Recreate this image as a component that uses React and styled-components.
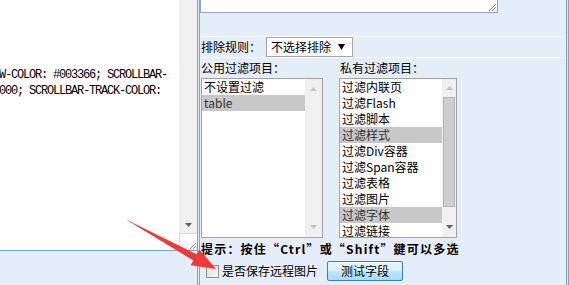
import React from "react";
import styled, { createGlobalStyle } from "styled-components";

const COL = {
  bg: "#E5EDF8",
  frame: "#7BA3D3",
  memo: "#8AA5C5",
  listBorder: "#A3A3A3",
  track: "#F0F0F0",
  sel: "#C8C8C8",
};

const CJK = `"Noto Sans CJK SC", "Liberation Sans", sans-serif`;

const GlobalStyle = createGlobalStyle`
  html, body { margin: 0; padding: 0; background: ${COL.bg}; }
  body {
    width: 569px; height: 285px; overflow: hidden;
    font-family: ${CJK};
    font-size: 12px; color: #000;
  }
`;

const Page = styled.div`
  position: relative;
  display: flex;
  width: 569px;
  height: 285px;
  overflow: hidden;
  background: ${COL.bg};
`;

/* ---------- left pane ---------- */
const LeftCol = styled.div`
  flex: none;
  width: 198px;
  height: 100%;
  box-sizing: border-box;
  border-right: 1px solid ${COL.frame};
`;

const Editor = styled.div`
  display: flex;
  height: 251px;
  box-sizing: border-box;
  border-bottom: 1px solid ${COL.frame};
  background: #fff;
`;

const CodeArea = styled.div`
  flex: 1;
  overflow: hidden;
  padding-top: 3px;
  font-family: "Liberation Mono", monospace;
  font-size: 12px;
  letter-spacing: -1.2px;
  line-height: 16px;
  white-space: pre;
  color: #000;
`;

const CodeLine = styled.div`
  height: 16px;
  margin-left: -1px;
`;

const VScroll = styled.div`
  flex: none;
  width: 18px;
  display: flex;
  flex-direction: column;
  background: ${COL.track};
`;

const VTrack = styled.div`
  flex: 1;
`;

const ScrollBtn = styled.div`
  flex: none;
  height: ${(p) => p.$h || 17}px;
  display: flex;
  align-items: center;
  justify-content: center;
`;

const Corner = styled.div`
  flex: none;
  height: 17px;
  box-sizing: border-box;
  background: #fff;
  border-top: 1px solid #DADADA;
  border-left: 1px solid #DADADA;
  display: flex;
  align-items: flex-end;
  justify-content: flex-end;
`;

/* ---------- right pane ---------- */
const RightCol = styled.div`
  flex: none;
  margin-left: 1px;
  width: 368px;
  height: 100%;
  box-sizing: border-box;
  border-left: 1px solid ${COL.frame};
  border-right: 1px solid ${COL.frame};
  display: flex;
  flex-direction: column;
`;

const Edge = styled.div`
  flex: none;
  margin-left: 1px;
  width: 1px;
  height: 100%;
  background: ${COL.frame};
`;

const MemoCell = styled.div`
  height: 37px;
  box-sizing: border-box;
  border-bottom: 1px solid #fff;
`;

const Memo = styled.div`
  position: relative;
  width: 298px;
  height: 13px;
  box-sizing: border-box;
  background: #fff;
  border: 1px solid ${COL.memo};
  border-top: none;
`;

const Grip = styled.svg`
  position: absolute;
  right: 0;
  bottom: 0;
`;

const RuleRow = styled.div`
  height: 21px;
  box-sizing: border-box;
  border-bottom: 1px solid #fff;
  display: flex;
  align-items: center;
  padding-left: 1px;
`;

const Label = styled.div`
  line-height: 16px;
  white-space: nowrap;
  padding-left: ${(p) => p.$indent || 0}px;
`;

const Select = styled.div`
  margin-left: 5px;
  width: 87px;
  height: 20px;
  box-sizing: border-box;
  border: 1px solid #A5A5A5;
  background: #fff;
  display: flex;
  align-items: center;
  justify-content: space-between;
  padding: 0 7px 0 4px;
  line-height: 16px;
`;

const FilterArea = styled.div`
  padding: 2px 0 0 1px;
  display: grid;
  grid-template-columns: 122px 118px;
  column-gap: 16px;
  row-gap: 2px;
`;

const ListBox = styled.div`
  height: 160px;
  box-sizing: border-box;
  border: 1px solid ${COL.listBorder};
  background: #fff;
  display: flex;
  overflow: hidden;
`;

const Items = styled.div`
  flex: 1;
  overflow: hidden;
`;

const Item = styled.div`
  height: 16px;
  line-height: 16px;
  padding-left: 2px;
  white-space: nowrap;
  background: ${(p) => (p.$sel ? COL.sel : "transparent")};
  color: ${(p) => (p.$sel ? "#333" : "#000")};
`;

const ListScroll = styled.div`
  flex: none;
  width: ${(p) => p.$w}px;
  background: ${COL.track};
  display: flex;
  flex-direction: column;
`;

const ThumbTrack = styled.div`
  flex: 1;
  display: flex;
  flex-direction: column;
  padding: 0 1px;
`;

const Thumb = styled.div`
  height: 110px;
  box-sizing: border-box;
  background: #CDCDCD;
  border: 1px solid #B5B5B5;
`;

const Hint = styled.div`
  margin-top: 3px;
  padding-left: 1px;
  line-height: 16px;
  font-weight: bold;
  letter-spacing: 1.2px;
  white-space: nowrap;
  font-family: "Noto Sans CJK SC", sans-serif;
`;

const ActionRow = styled.div`
  margin-top: 4px;
  height: 20px;
  display: flex;
  align-items: center;
  padding-left: 6px;
`;

const Check = styled.span`
  flex: none;
  width: 13px;
  height: 13px;
  box-sizing: border-box;
  border: 1px solid #8F8F8F;
  background: linear-gradient(135deg, #DCDCDC, #FBFBFB);
  margin-right: 3px;
`;

const Button = styled.button`
  margin-left: 9px;
  width: 76px;
  height: 20px;
  padding: 0;
  box-sizing: border-box;
  border: 1px solid #3C7FB1;
  border-radius: 2px;
  background: linear-gradient(#EAF6FD 0%, #D9F0FC 50%, #BEE6FD 51%, #A7D9F5 100%);
  font-family: ${CJK};
  font-size: 12px;
  line-height: 16px;
  color: #000;
`;

const Overlay = styled.svg`
  position: absolute;
  left: 0;
  top: 0;
  pointer-events: none;
`;

const Tri = ({ up, color }) => (
  <svg width="7" height="4" viewBox="0 0 7 4">
    <polygon points={up ? "3.5,0 7,4 0,4" : "0,0 7,0 3.5,4"} fill={color} />
  </svg>
);

const GripIcon = () => (
  <svg width="10" height="10" viewBox="0 0 10 10">
    <line x1="9" y1="3" x2="3" y2="9" stroke="#8C8C8C" strokeWidth="1" />
    <line x1="9" y1="6" x2="6" y2="9" stroke="#8C8C8C" strokeWidth="1" />
  </svg>
);

const publicItems = [
  { t: "不设置过滤" },
  { t: "table", sel: true },
];

const privateItems = [
  { t: "过滤内联页" },
  { t: "过滤Flash" },
  { t: "过滤脚本" },
  { t: "过滤样式", sel: true },
  { t: "过滤Div容器" },
  { t: "过滤Span容器" },
  { t: "过滤表格" },
  { t: "过滤图片" },
  { t: "过滤字体", sel: true },
  { t: "过滤链接" },
];

const codeLines = [
  "",
  "",
  "",
  "",
  "W-COLOR: #003366; SCROLLBAR-",
  "000; SCROLLBAR-TRACK-COLOR:",
];

export default function App() {
  return (
    <>
      <GlobalStyle />
      <Page>
        <LeftCol>
          <Editor>
            <CodeArea>
              {codeLines.map((l, i) => (
                <CodeLine key={i}>{l}</CodeLine>
              ))}
            </CodeArea>
            <VScroll>
              <VTrack />
              <ScrollBtn $h={17}>
                <Tri color="#606060" />
              </ScrollBtn>
              <Corner>
                <GripIcon />
              </Corner>
            </VScroll>
          </Editor>
        </LeftCol>

        <RightCol>
          <MemoCell>
            <Memo>
              <Grip width="10" height="10" viewBox="0 0 10 10">
                <line x1="9" y1="2" x2="2" y2="9" stroke="#8C8C8C" />
                <line x1="9" y1="5" x2="5" y2="9" stroke="#8C8C8C" />
              </Grip>
            </Memo>
          </MemoCell>

          <RuleRow>
            <Label>排除规则：</Label>
            <Select>
              <span>不选择排除</span>
              <svg width="7" height="6" viewBox="0 0 7 6">
                <polygon points="0,0 7,0 3.5,6" fill="#000" />
              </svg>
            </Select>
          </RuleRow>

          <FilterArea>
            <Label>公用过滤项目：</Label>
            <Label $indent={1}>私有过滤项目：</Label>
            <ListBox>
              <Items>
                {publicItems.map((it) => (
                  <Item key={it.t} $sel={it.sel}>
                    {it.t}
                  </Item>
                ))}
              </Items>
              <ListScroll $w={17}>
                <ScrollBtn $h={20}>
                  <Tri up color="#C2C2C2" />
                </ScrollBtn>
                <VTrack />
                <ScrollBtn $h={20}>
                  <Tri color="#C2C2C2" />
                </ScrollBtn>
              </ListScroll>
            </ListBox>
            <ListBox>
              <Items>
                {privateItems.map((it) => (
                  <Item key={it.t} $sel={it.sel}>
                    {it.t}
                  </Item>
                ))}
              </Items>
              <ListScroll $w={14}>
                <ScrollBtn $h={18}>
                  <Tri up color="#C2C2C2" />
                </ScrollBtn>
                <ThumbTrack>
                  <Thumb />
                </ThumbTrack>
                <ScrollBtn $h={20}>
                  <Tri color="#606060" />
                </ScrollBtn>
              </ListScroll>
            </ListBox>
          </FilterArea>

          <Hint>提示：按住“Ctrl”或“Shift”鍵可以多选</Hint>

          <ActionRow>
            <Check />
            <Label>是否保存远程图片</Label>
            <Button type="button">测试字段</Button>
          </ActionRow>
        </RightCol>
        <Edge />

        <Overlay width="569" height="285" viewBox="0 0 569 285">
          <polygon
            points="125,219 196.7,254.3 199.3,249.5 216,269 190.7,265.3 193.3,260.5"
            fill="#F03A3A"
          />
        </Overlay>
      </Page>
    </>
  );
}
